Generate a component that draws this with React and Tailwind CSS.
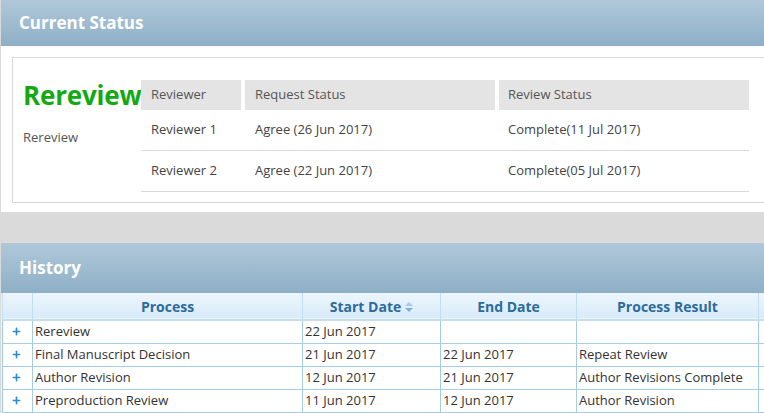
import { Plus } from "lucide-react";

const reviewers = [
  { name: "Reviewer 1", request: "Agree (26 Jun 2017)", review: "Complete(11 Jul 2017)" },
  { name: "Reviewer 2", request: "Agree (22 Jun 2017)", review: "Complete(05 Jul 2017)" },
];

const history = [
  { process: "Rereview", start: "22 Jun 2017", end: "", result: "" },
  { process: "Final Manuscript Decision", start: "21 Jun 2017", end: "22 Jun 2017", result: "Repeat Review" },
  { process: "Author Revision", start: "12 Jun 2017", end: "21 Jun 2017", result: "Author Revisions Complete" },
  { process: "Preproduction Review", start: "11 Jun 2017", end: "12 Jun 2017", result: "Author Revision" },
];

function PanelHeader({ title, tall }) {
  return (
    <div
      className={`flex items-center pl-[18px] bg-gradient-to-b from-[#b0c8d9] to-[#8eafc7] text-white font-bold text-[17px] ${
        tall ? "h-[50px]" : "h-[46px]"
      }`}
    >
      {title}
    </div>
  );
}

function SortIcon() {
  return (
    <svg width="8" height="11" viewBox="0 0 8 11" className="ml-1 inline-block">
      <path d="M4 0 L8 4 L0 4 Z" fill="#a9cbe6" />
      <path d="M0 6 L8 6 L4 10 Z" fill="#7fb1d9" />
    </svg>
  );
}

export default function App() {
  return (
    <div
      className="min-h-screen bg-[#dadada] pl-px overflow-hidden text-[13px] text-[#444]"
      style={{ fontFamily: "'Open Sans', 'Liberation Sans', sans-serif" }}
    >
      {/* Current Status */}
      <section className="bg-white">
        <PanelHeader title="Current Status" />
        <div className="pt-[11px] pb-[9px] pl-[11px]">
          <div className="border border-r-0 border-[#d6d6d6] pt-[22px] pb-[10px] flex">
            <div className="w-[128px] shrink-0 pl-[10px]">
              <div className="text-[26px] leading-[30px] font-bold text-[#12a912] tracking-[-0.2px] whitespace-nowrap">
                Rereview
              </div>
              <div className="mt-[18px] text-[#555]">Rereview</div>
            </div>
            <div className="w-[608px]">
              <div className="flex gap-[4px] h-[30px] text-[#555]">
                <div className="w-[100px] bg-[#e4e4e4] flex items-center pl-[10px]">Reviewer</div>
                <div className="w-[250px] bg-[#e4e4e4] flex items-center pl-[10px]">Request Status</div>
                <div className="w-[250px] bg-[#e4e4e4] flex items-center pl-[9px]">Review Status</div>
              </div>
              {reviewers.map((r) => (
                <div key={r.name} className="flex h-[41px] items-center border-b border-[#d8d8d8]">
                  <div className="w-[104px] pl-[10px]">{r.name}</div>
                  <div className="w-[254px] pl-[10px]">{r.request}</div>
                  <div className="w-[250px] pl-[9px]">{r.review}</div>
                </div>
              ))}
            </div>
          </div>
        </div>
      </section>

      <div className="h-[31px]" />

      {/* History */}
      <section className="bg-white">
        <PanelHeader title="History" tall />
        <div className="pl-[1px] bg-[#e8f3fb]">
          <table className="w-[800px] border-collapse table-fixed">
            <colgroup>
              <col className="w-[30px]" />
              <col className="w-[270px]" />
              <col className="w-[138px]" />
              <col className="w-[136px]" />
              <col className="w-[182px]" />
              <col />
            </colgroup>
            <thead>
              <tr className="h-[27px] bg-gradient-to-b from-[#ecf6fd] to-[#d8ebf9] border-b-2 border-[#c6deef] text-[#2c6b9b] font-bold text-[14px]">
                <th className="border-l border-r border-[#c4ddee]" />
                <th className="border-r border-[#c4ddee] font-bold">Process</th>
                <th className="border-r border-[#c4ddee] font-bold">
                  Start Date
                  <SortIcon />
                </th>
                <th className="border-r border-[#c4ddee] font-bold">End Date</th>
                <th className="border-r border-[#c4ddee] font-bold">Process Result</th>
                <th />
              </tr>
            </thead>
            <tbody className="bg-white text-[#333]">
              {history.map((h) => (
                <tr key={h.process} className="h-[23px] border-b border-[#a5cde8]">
                  <td className="border-l border-r border-[#a5cde8] pl-[8px]">
                    <Plus size={11} strokeWidth={3.5} className="inline-block text-[#2b8ad6] -mt-[2px]" />
                  </td>
                  <td className="border-r border-[#a5cde8] pl-[2px] whitespace-nowrap">{h.process}</td>
                  <td className="border-r border-[#a5cde8] pl-[2px] whitespace-nowrap">{h.start}</td>
                  <td className="border-r border-[#a5cde8] pl-[2px] whitespace-nowrap">{h.end}</td>
                  <td className="border-r border-[#a5cde8] pl-[2px] whitespace-nowrap">{h.result}</td>
                  <td />
                </tr>
              ))}
            </tbody>
          </table>
        </div>
      </section>
    </div>
  );
}
